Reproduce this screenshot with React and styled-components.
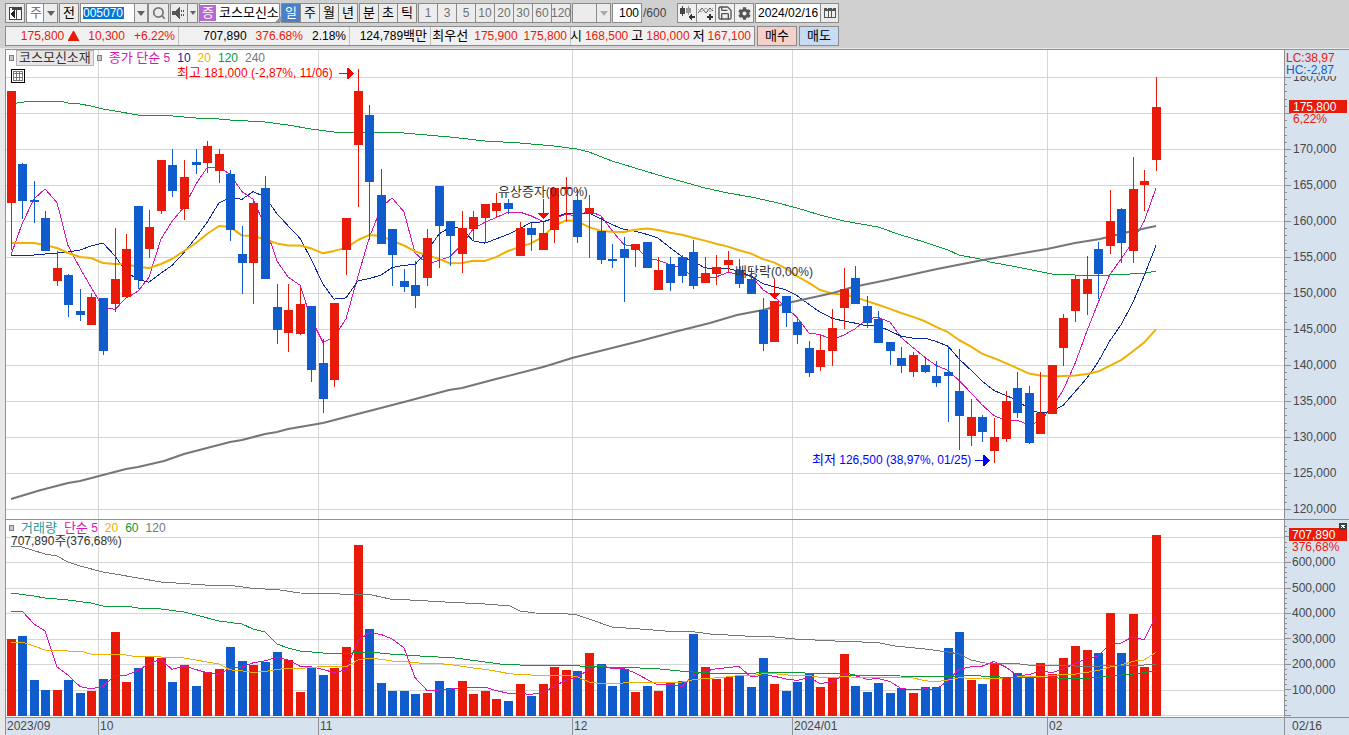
import styled, { createGlobalStyle } from 'styled-components';
import { Save, Search } from 'lucide-react';
import { FaCog } from 'react-icons/fa';

const RED = '#e81a0a';
const BLUE = '#115ccc';

// [high, body top, body bottom, low, rising, volume top] in window pixels
const candles = [
  [91, 91, 203, 250, 1, 639], [163, 164, 201, 219, 0, 636],
  [181, 200, 202, 223, 0, 680], [211, 218, 251, 251, 0, 690],
  [251, 268, 281, 286, 1, 690], [274, 275, 305, 317, 0, 680],
  [289, 311, 315, 321, 0, 693], [293, 297, 325, 325, 1, 691],
  [298, 298, 351, 355, 0, 679], [228, 279, 304, 312, 1, 632],
  [234, 249, 297, 297, 1, 682], [206, 206, 280, 289, 0, 668],
  [210, 227, 249, 258, 1, 657], [160, 160, 211, 214, 1, 658],
  [149, 165, 191, 197, 0, 682], [160, 177, 209, 220, 1, 665],
  [149, 162, 165, 174, 0, 686], [141, 146, 163, 173, 1, 672],
  [149, 154, 171, 183, 1, 669], [170, 174, 230, 241, 0, 647],
  [226, 254, 263, 294, 0, 661], [199, 203, 263, 304, 1, 665],
  [176, 188, 279, 279, 0, 662], [284, 307, 330, 344, 0, 652],
  [284, 310, 333, 352, 1, 660], [288, 304, 334, 335, 1, 692],
  [306, 306, 370, 382, 0, 668], [339, 363, 399, 413, 0, 675],
  [303, 303, 380, 387, 1, 668], [218, 218, 250, 275, 1, 647],
  [69, 91, 145, 207, 1, 545], [105, 115, 182, 240, 0, 629],
  [169, 195, 244, 244, 0, 683], [229, 229, 255, 286, 0, 691],
  [269, 281, 287, 292, 0, 691], [261, 285, 296, 308, 0, 694],
  [229, 238, 278, 286, 1, 693], [186, 186, 226, 268, 0, 681],
  [221, 221, 236, 266, 0, 688], [211, 228, 254, 273, 1, 681],
  [211, 217, 229, 241, 1, 694], [204, 204, 218, 243, 1, 691],
  [193, 203, 211, 217, 1, 699], [199, 203, 209, 214, 0, 701],
  [222, 228, 256, 256, 1, 684], [223, 228, 235, 251, 0, 696],
  [222, 233, 250, 250, 1, 684], [188, 188, 230, 243, 1, 667],
  [177, 187, 189, 222, 1, 670], [189, 200, 237, 243, 0, 671],
  [195, 208, 214, 258, 1, 653], [220, 231, 260, 264, 0, 664],
  [244, 259, 261, 268, 0, 686], [237, 249, 258, 302, 0, 669],
  [244, 244, 250, 267, 1, 692], [242, 242, 268, 268, 0, 686],
  [257, 270, 290, 290, 1, 691], [257, 264, 283, 291, 0, 683],
  [255, 257, 276, 283, 0, 681], [240, 252, 286, 289, 0, 634],
  [257, 273, 283, 283, 1, 667], [255, 267, 274, 285, 1, 679],
  [251, 260, 265, 272, 1, 677], [259, 270, 284, 288, 0, 675],
  [268, 279, 294, 294, 0, 687], [298, 310, 344, 351, 0, 658],
  [301, 301, 342, 342, 1, 684], [296, 296, 313, 327, 0, 691],
  [319, 322, 335, 344, 0, 682], [341, 348, 373, 377, 0, 673],
  [335, 350, 367, 371, 1, 687], [309, 328, 351, 366, 1, 678],
  [268, 289, 308, 329, 1, 654], [266, 278, 304, 304, 0, 686],
  [296, 306, 323, 328, 0, 692], [311, 319, 343, 343, 0, 683],
  [342, 342, 351, 365, 0, 693], [347, 358, 366, 373, 0, 688],
  [352, 355, 372, 377, 1, 693], [357, 365, 372, 373, 0, 687],
  [361, 376, 383, 387, 0, 687], [346, 372, 376, 422, 0, 648],
  [349, 391, 416, 450, 0, 632], [399, 417, 436, 446, 1, 680],
  [415, 417, 432, 442, 0, 684], [418, 437, 451, 463, 1, 663],
  [391, 401, 439, 442, 1, 677], [372, 388, 413, 418, 0, 673],
  [386, 393, 443, 444, 0, 677], [372, 413, 434, 434, 1, 663],
  [365, 365, 414, 414, 1, 674], [314, 318, 348, 366, 1, 658],
  [276, 279, 311, 322, 1, 646], [256, 279, 294, 315, 1, 650],
  [242, 249, 274, 299, 0, 653], [190, 221, 246, 254, 1, 613],
  [208, 209, 243, 263, 0, 653], [157, 189, 251, 263, 1, 614],
  [170, 181, 185, 211, 1, 667], [77, 107, 160, 171, 1, 535],
];

const closes = candles.map((c) => (c[4] ? c[1] : c[2]));
const volumes = candles.map((c) => c[5]);

const candleX = (i) => Math.floor(5 + i * 11.57);

// seed holds the first values, where the window reaches back before the data
const average = (values, seed) =>
  values.map((_, i) => {
    const size = seed.length + 1;
    const y =
      i < seed.length
        ? seed[i]
        : values.slice(i - size + 1, i + 1).reduce((a, b) => a + b, 0) / size;
    return `${candleX(i)},${y.toFixed(1)}`;
  });

const priceMa5 = average(closes, [255, 224, 199, 189]);
const priceMa10 = average(closes, [255, 256, 255, 254, 253, 252, 250, 246, 243]);
const priceMa20 = average(closes, [
  243, 243, 243, 245, 248, 253, 257, 258, 263, 264, 264, 267, 268, 264, 259,
  251, 243, 234, 226,
]);
const volumeMa5 = average(volumes, [612, 611, 624, 631]);
const volumeMa20 = average(volumes, [
  642, 642, 646, 650, 650, 651, 651, 654, 655, 654, 655, 657, 656, 657, 657,
  658, 660, 662, 664,
]);

const priceMa120 =
  '5,104 24,101 54,101 62,103 74,104 85,106 97,109 109,111 132,115 143,116 155,115 178,117 190,118 201,118 224,120 259,122 282,125 305,129 328,132 386,132 409,134 444,137 479,141 514,143 548,146 571,149 583,152 606,161 629,168 652,175 674,181 699,188 722,193 745,197 768,202 791,208 814,215 838,221 872,227 895,235 918,242 942,250 953,255 974,259 984,262 1011,267 1046,274 1069,275 1104,275 1124,274 1140,273 1150,271';
const priceMa240 =
  '5,499 35,490 62,483 74,481 97,475 120,469 132,467 158,461 178,454 201,448 224,442 236,440 259,434 271,432 282,429 317,423 340,417 398,402 443,390 456,388 490,379 537,367 547,364 566,358 634,341 664,333 704,323 731,315 757,310 786,302 827,293 847,287 881,280 931,269 977,260 1041,249 1069,243 1094,239 1122,232 1136,229 1150,226';
const volumeMa60 =
  '5,593 28,596 39,598 62,600 85,603 97,606 120,606 132,608 155,609 178,612 190,615 213,621 236,624 247,629 259,632 271,644 282,648 294,651 317,653 340,654 352,652 363,652 384,654 414,656 449,658 464,660 494,664 514,665 549,665 599,667 634,668 654,669 674,671 687,672 704,673 750,673 759,672 794,672 799,673 839,673 849,675 889,675 894,676 944,677 956,675 994,677 1034,677 1052,678 1056,679 1084,678 1104,676 1127,674 1150,671';
const volumeMa120 =
  '5,546 16,547 39,554 51,556 62,562 74,566 97,572 109,574 132,578 155,582 199,585 229,586 244,588 274,590 294,593 334,594 366,595 384,599 404,600 439,602 479,604 504,606 514,611 529,613 562,614 571,615 583,619 606,627 634,629 659,631 689,632 704,634 739,636 759,636 789,639 829,641 856,642 874,643 889,646 909,648 919,649 934,651 942,652 953,654 965,660 979,663 1014,664 1022,665 1059,665 1069,666 1094,666 1109,665 1119,666 1138,665 1150,664';

const months = [
  { x: 98, label: '10' },
  { x: 318, label: '11' },
  { x: 572, label: '12' },
  { x: 792, label: '2024/01' },
  { x: 1047, label: '02' },
];

const priceTicks = Array.from({ length: 13 }, (_, i) => ({
  y: 77 + i * 36,
  label: `${180 - i * 5},000`,
})).filter((tick) => tick.label !== '175,000');

const volumeTicks = [
  { y: 562, label: '600,000' },
  { y: 588, label: '500,000' },
  { y: 613, label: '400,000' },
  { y: 639, label: '300,000' },
  { y: 664, label: '200,000' },
  { y: 690, label: '100,000' },
];

const periods = ['일', '주', '월', '년'];
const units = ['분', '초', '틱'];
const minutes = ['1', '3', '5', '10', '20', '30', '60', '120'];

function MonthLines({ top, height }) {
  return months.map((m) => (
    <rect key={m.x} x={m.x - 6} y={top} width='1' height={height} fill='#d6d6d6' />
  ));
}

function MaLine({ points, color, width = 1 }) {
  const list = Array.isArray(points) ? points.join(' ') : points;
  return (
    <polyline
      points={list}
      fill='none'
      stroke={color}
      strokeWidth={width}
      strokeLinejoin='round'
      shapeRendering={width > 1 ? 'geometricPrecision' : 'crispEdges'}
    />
  );
}

// Small "event" arrow that points down at a candle
function EventArrow({ x, y }) {
  return (
    <g fill='#ff0000'>
      <rect x={x} y={y} width='1' height='14' />
      <path d={`M${x - 5} ${y + 14}h11l-5 6h-1z`} />
    </g>
  );
}

function PriceChart() {
  return (
    <Chart $height={469} role='img' aria-label='일봉 차트'>
      <g transform='translate(0 -50)'>
        {Array.from({ length: 13 }, (_, i) => (
          <rect key={i} y={77 + i * 36} width='100%' height='1' fill='#d6d6d6' />
        ))}
        <MonthLines top={50} height={469} />
        <MaLine points={priceMa120} color='#0c9a38' />
        <MaLine points={priceMa5} color='#dc14b4' />
        <MaLine points={priceMa10} color='#0a28a0' />
        <MaLine points={priceMa20} color='#f0b000' width={2} />
        <MaLine points={priceMa240} color='#767676' width={2} />
        {candles.map(([high, top, bottom, low, up], i) => (
          <g key={i} fill={up ? RED : BLUE}>
            <rect x={candleX(i)} y={high} width='1' height={low - high} />
            <rect x={candleX(i) - 4} y={top} width='9' height={bottom - top} />
          </g>
        ))}
        <ChartText x='171' y='77' $color='#ff0000'>
          <KoText>최고</KoText> 181,000 (-2,87%, 11/06)
        </ChartText>
        <path d='M333 73h8v-5h1l6 5v1l-6 5h-1v-5h-8z' fill='#ff0000' />
        <ChartText x='806' y='464' $color='#0000ff'>
          <KoText>최저</KoText> 126,500 (38,97%, 01/25)
        </ChartText>
        <path d='M969 460h8v-5h1l6 5v1l-6 5h-1v-5h-8z' fill='#0000ff' />
        <ChartText x='492' y='196'>
          <KoText>유상증자</KoText>(0,00%)
        </ChartText>
        <EventArrow x={537} y={199} />
        <ChartText x='729' y='276'>
          <KoText>배당락</KoText>(0,00%)
        </ChartText>
        <EventArrow x={768} y={279} />
      </g>
    </Chart>
  );
}

function PriceAxis() {
  return (
    <Chart $height={469} role='img' aria-label='가격 축'>
      <g transform='translate(0 -50)'>
        {Array.from({ length: 61 }, (_, i) => (
          <rect
            key={i}
            y={77 + Math.round(i * 7.2)}
            width={i % 5 ? 2 : 6}
            height='1'
            fill='#909090'
          />
        ))}
        {priceTicks.map((tick) => (
          <ChartText key={tick.y} x='8' y={tick.y + 4} $color='#484848'>
            {tick.label}
          </ChartText>
        ))}
        <rect y='50' width='64' height='26' fill='#d7e2ef' />
        <ChartText x='1' y='62' $color={RED}>LC:38,97</ChartText>
        <ChartText x='1' y='74' $color={BLUE}>HC:-2,87</ChartText>
        <rect x='4' y='100' width='58' height='13' fill={RED} />
        <ChartText x='8' y='111' $color='#fff'>175,800</ChartText>
        <ChartText x='8' y='123' $color={RED}>6,22%</ChartText>
      </g>
    </Chart>
  );
}

function VolumeChart() {
  return (
    <Chart $height={197} role='img' aria-label='거래량 차트'>
      <g transform='translate(0 -520)'>
        {[537, 562, 588, 613, 639, 664, 690, 715].map((y) => (
          <rect key={y} y={y} width='100%' height='1' fill='#d6d6d6' />
        ))}
        <MonthLines top={520} height={197} />
        {candles.map((c, i) => (
          <rect
            key={i}
            x={candleX(i) - 4}
            y={c[5]}
            width='9'
            height={716 - c[5]}
            fill={c[4] ? RED : BLUE}
          />
        ))}
        <MaLine points={volumeMa5} color='#dc14b4' />
        <MaLine points={volumeMa20} color='#f0b000' />
        <MaLine points={volumeMa60} color='#0c9a38' />
        <MaLine points={volumeMa120} color='#767676' />
      </g>
    </Chart>
  );
}

function VolumeAxis() {
  return (
    <Chart $height={197} role='img' aria-label='거래량 축'>
      <g transform='translate(0 -520)'>
        {Array.from({ length: 38 }, (_, i) => (
          <rect
            key={i}
            y={715 - Math.round(i * 5.1)}
            width={i % 5 ? 2 : 6}
            height='1'
            fill='#909090'
          />
        ))}
        {volumeTicks.map((tick) => (
          <ChartText key={tick.y} x='7' y={tick.y + 4} $color='#484848'>
            {tick.label}
          </ChartText>
        ))}
        <rect x='4' y='528' width='58' height='13' fill={RED} />
        <ChartText x='7' y='539' $color='#fff'>707,890</ChartText>
        <ChartText x='7' y='551' $color={RED}>376,68%</ChartText>
        <rect x='54' y='523' width='8' height='7' fill='#404040' />
        <path d='M56 525l4 3M60 525l-4 3' stroke='#fff' />
      </g>
    </Chart>
  );
}

function TimeAxis() {
  return (
    <Chart $height={17} role='img' aria-label='날짜 축'>
      <ChartText x='1' y='12' $color='#484848'>2023/09</ChartText>
      {months.map((m) => (
        <g key={m.x}>
          <rect x={m.x - 6} width='1' height='17' fill='#909090' />
          <ChartText x={m.x - 4} y='12' $color='#484848'>{m.label}</ChartText>
        </g>
      ))}
    </Chart>
  );
}

function Caret({ color = '#606060' }) {
  return (
    <svg width='8' height='5' aria-hidden='true'>
      <path d='M0 0h8l-4 5z' fill={color} />
    </svg>
  );
}

function Toolbar() {
  return (
    <Row $gap={1}>
      <ToolButton $width={20} aria-label='화면'>
        <svg width='14' height='14' shapeRendering='crispEdges'>
          <path d='M1 1h12v12h-12z' fill='#fff' stroke='#444' />
          <path d='M4 1h9v3h-9z' fill='#444' />
          <path d='M8 4h1v9h-1z' fill='#444' />
          <path d='M7 4v8l-5-4z' fill='#222' />
        </svg>
      </ToolButton>
      <ComboBox $width={32}>
        <Select aria-label='주기' defaultValue='주' $color='#666'>
          <option>주</option>
        </Select>
        <ArrowBox><Caret /></ArrowBox>
      </ComboBox>
      <ToolButton $width={20}><Ko>전</Ko></ToolButton>
      <Group>
        <CodeBox>
          <CodeInput aria-label='종목코드' defaultValue='005070' />
          <ArrowButton aria-label='종목 목록'><Caret /></ArrowButton>
        </CodeBox>
        <ToolButton $width={21} aria-label='종목 검색'>
          <Search size={14} color='#777' strokeWidth={3} />
        </ToolButton>
      </Group>
      <Group>
        <ToolButton $width={18} aria-label='소리'>
          <svg width='14' height='14' shapeRendering='crispEdges'>
            <path d='M0 5h3l5-4v12l-5-4h-3z' fill='#555' />
            <path d='M9 4h1v2h-1zM11 4h1v2h-1zM9 8h1v2h-1zM11 8h1v2h-1z' fill='#555' />
          </svg>
        </ToolButton>
        <ToolButton $width={11} aria-label='소리 설정'>
          <svg width='6' height='4' aria-hidden='true'>
            <path d='M0 0h6l-3 4z' fill='#606060' />
          </svg>
        </ToolButton>
      </Group>
      <NameBox>
        <Badge>증</Badge>
        <Ko>코스모신소</Ko>
        <svg width='7' height='7' aria-hidden='true'>
          <path d='M7 0v7h-7z' fill='#999' />
        </svg>
      </NameBox>
      <Group>
        {periods.map((p) => (
          <ToolButton key={p} $width={20} $active={p === '일'}>
            <Ko>{p}</Ko>
          </ToolButton>
        ))}
      </Group>
      <Group>
        {units.map((u) => (
          <ToolButton key={u} $width={20}><Ko>{u}</Ko></ToolButton>
        ))}
      </Group>
      <Group>
        {minutes.map((m) => (
          <ToolButton key={m} $width={20} $muted>{m}</ToolButton>
        ))}
      </Group>
      <ComboBox $width={39} $muted>
        <Select aria-label='분 단위' disabled />
        <ArrowBox><Caret color='#aaa' /></ArrowBox>
      </ComboBox>
      <CountInput aria-label='봉 개수' defaultValue='100' />
      <Total>/600</Total>
      <Group>
        <ToolButton $width={20} $light aria-label='차트 유형'>
          <svg width='16' height='16' shapeRendering='crispEdges'>
            <path d='M1 3h5v6h-5zM3 1h1v10h-1z' fill='#444' />
            <path d='M7 3h5v5h-5zM9 1h1v9h-1z' fill='#999' />
            <path d='M16 11v2h-3v3l-4-4 4-4v3z' fill='#333' />
          </svg>
        </ToolButton>
        <ToolButton $width={20} $light aria-label='지표 추가'>
          <svg width='16' height='16'>
            <path d='M0 8l4-5 4 5 4-5 3 3' fill='none' stroke='#555' />
            <path d='M0 4l3 3 5-4 4 4 3-4' fill='none' stroke='#aaa' />
            <path d='M11 9h2v2h2v2h-2v2h-2v-2h-2v-2h2z' fill='#333' />
          </svg>
        </ToolButton>
        <ToolButton $width={20} $light aria-label='저장'>
          <Save size={16} color='#555' strokeWidth={2} />
        </ToolButton>
        <ToolButton $width={20} $light aria-label='설정'>
          <FaCog size={13} color='#555' />
        </ToolButton>
      </Group>
      <DateBox>
        <DateInput aria-label='날짜' defaultValue='2024/02/16' />
        <ArrowButton $width={18} aria-label='달력'>
          <svg width='12' height='12' shapeRendering='crispEdges'>
            <path d='M0 1h12v10h-12z' fill='#555' />
            <path d='M1 4h3v3h-3zM5 4h2v3h-2zM8 4h3v3h-3zM1 7h3v3h-3zM5 7h2v3h-2zM8 7h3v3h-3zM3 0h1v2h-1zM8 0h1v2h-1z' fill='#eee' />
          </svg>
        </ArrowButton>
      </DateBox>
    </Row>
  );
}

function QuoteBar() {
  return (
    <Row $gap={2}>
      <Quotes>
        <QuoteCell $width={172}>
          <Red>175,800</Red>
          <svg width='11' height='10' aria-label='상승'>
            <path d='M5 0h1l5 9v1h-11v-1z' fill={RED} />
          </svg>
          <Wide><Red>10,300</Red></Wide>
          <Wide><Red>+6.22%</Red></Wide>
        </QuoteCell>
        <QuoteCell $width={171} $gap={9}>
          <span>707,890</span>
          <Red>376.68%</Red>
          <span>2.18%</span>
        </QuoteCell>
        <QuoteCell $width={81}>
          <span>124,789<Ko>백만</Ko></span>
        </QuoteCell>
        <QuoteCell $width={140} $gap={6}>
          <Ko>최우선</Ko>
          <Red>175,900</Red>
          <Red>175,800</Red>
        </QuoteCell>
        <QuoteCell $width={184} $gap={3}>
          <Ko>시</Ko>
          <Red>168,500</Red>
          <Ko>고</Ko>
          <Red>180,000</Red>
          <Ko>저</Ko>
          <Red>167,100</Red>
        </QuoteCell>
      </Quotes>
      <OrderButton $color='#f6d0cb'><Ko>매수</Ko></OrderButton>
      <OrderButton $color='#c6dcf4'><Ko>매도</Ko></OrderButton>
    </Row>
  );
}

function App() {
  return (
    <>
      <GlobalStyle />
      <Header>
        <Toolbar />
        <QuoteBar />
      </Header>
      <Main>
        <Panel>
          <PriceChart />
          <Legend>
            <Marker />
            <StockName>코스모신소재</StockName>
            <Marker />
            <LegendItem $color='#dc14b4'><Ko>종가 단순</Ko> 5</LegendItem>
            <LegendItem $color='#0a28a0'>10</LegendItem>
            <LegendItem $color='#f0b000'>20</LegendItem>
            <LegendItem $color='#0c9a38'>120</LegendItem>
            <LegendItem $color='#767676'>240</LegendItem>
          </Legend>
          <GridButton aria-label='표 보기'>
            <svg width='10' height='10' shapeRendering='crispEdges'>
              <path d='M0 0h10v10h-10z' fill='#777' />
              <path d='M1 1h2v1h-2zM4 1h2v1h-2zM7 1h2v1h-2zM1 3h2v3h-2zM4 3h2v3h-2zM7 3h2v3h-2zM1 7h2v2h-2zM4 7h2v2h-2zM7 7h2v2h-2z' fill='#fff' />
            </svg>
          </GridButton>
        </Panel>
        <Axis><PriceAxis /></Axis>
        <Panel>
          <VolumeChart />
          <Legend>
            <Marker />
            <LegendItem $color='#2c9696'><Ko>거래량</Ko></LegendItem>
            <LegendItem $color='#dc14b4'><Ko>단순</Ko> 5</LegendItem>
            <LegendItem $color='#f0b000'>20</LegendItem>
            <LegendItem $color='#0c9a38'>60</LegendItem>
            <LegendItem $color='#767676'>120</LegendItem>
          </Legend>
          <VolumeNow>707,890<Ko>주</Ko>(376,68%)</VolumeNow>
        </Panel>
        <Axis><VolumeAxis /></Axis>
        <TimePanel><TimeAxis /></TimePanel>
        <Axis><LastDate>02/16</LastDate></Axis>
      </Main>
    </>
  );
}

export default App;

const GlobalStyle = createGlobalStyle`
  * {
    box-sizing: border-box;
  }
  body {
    margin: 0;
    background: #e8e8e8;
    color: #000;
  }
  body, button, input, select {
    font-family: 'Liberation Sans', 'Noto Sans CJK KR', sans-serif;
    font-size: 12px;
    line-height: 16px;
  }
`;

// Hangul is set one size larger than the figures beside it
const Ko = styled.span`
  font-size: 13px;
  line-height: 14px;
`;

const KoText = styled.tspan`
  font-size: 13px;
`;

const Header = styled.header`
  display: flex;
  flex-direction: column;
  gap: 3px;
  padding: 3px 5px 2px;
  background: #d0d0d0;
  border-bottom: 1px solid #e8e8e8;
`;

const Row = styled.div`
  display: flex;
  gap: ${(props) => props.$gap}px;
  height: 20px;
  white-space: nowrap;
`;

const Group = styled.div`
  display: flex;
`;

const ToolButton = styled.button`
  display: flex;
  justify-content: center;
  align-items: center;
  flex: none;
  width: ${(props) => props.$width}px;
  height: 20px;
  padding: 0;
  border: 1px solid #8a8a8a;
  background: ${(props) =>
    props.$active ? '#4a80c8' : props.$light ? '#f0f0f0' : '#ececec'};
  color: ${(props) =>
    props.$active ? '#fff' : props.$muted ? '#707070' : '#000'};
  & + & {
    margin-left: -1px;
  }
`;

const ComboBox = styled.div`
  display: grid;
  grid-template-columns: 1fr 14px;
  width: ${(props) => props.$width}px;
  border: 1px solid #8a8a8a;
  background: ${(props) => (props.$muted ? '#ececec' : '#fff')};
`;

const Select = styled.select`
  grid-area: 1 / 1 / 2 / 3;
  min-width: 0;
  padding: 0 0 0 3px;
  border: 0;
  appearance: none;
  background: none;
  color: ${(props) => props.$color};
  font-size: 13px;
`;

const ArrowBox = styled.span`
  grid-area: 1 / 2;
  display: flex;
  justify-content: center;
  align-items: center;
  border-left: 1px solid #8a8a8a;
  background: #ececec;
  pointer-events: none;
`;

const ArrowButton = styled.button`
  display: flex;
  justify-content: center;
  align-items: center;
  flex: none;
  width: ${(props) => props.$width || 13}px;
  margin-left: auto;
  padding: 0;
  border: 0;
  border-left: 1px solid #8a8a8a;
  background: #ececec;
`;

const CodeBox = styled.div`
  display: flex;
  width: 68px;
  border: 1px solid #8a8a8a;
  background: #fff;
`;

const CodeInput = styled.input`
  width: 41px;
  margin: 3px 2px;
  padding: 0;
  border: 0;
  background: #0078d7;
  color: #fff;
`;

const NameBox = styled.div`
  display: flex;
  align-items: center;
  gap: 3px;
  width: 81px;
  border: 1px solid #8a8a8a;
  background: #fff;
  svg {
    flex: none;
    align-self: flex-end;
    margin-left: -7px;
  }
`;

const Badge = styled.span`
  width: 16px;
  flex: none;
  background: #b46ad2;
  color: #fff;
  font-size: 13px;
  text-align: center;
`;

const CountInput = styled.input`
  width: 30px;
  padding: 0 2px;
  border: 1px solid #8a8a8a;
  background: #fff;
  text-align: right;
`;

const Total = styled.span`
  width: 33px;
  color: #444;
  line-height: 20px;
`;

const DateBox = styled.div`
  display: flex;
  width: 84px;
  border: 1px solid #8a8a8a;
  background: #fff;
`;

const DateInput = styled.input`
  width: 64px;
  padding: 0 0 0 2px;
  border: 0;
`;

const Quotes = styled.div`
  display: flex;
  border: 1px solid #8a8a8a;
  background: #f0f0f0;
`;

const QuoteCell = styled.div`
  display: flex;
  justify-content: flex-end;
  align-items: center;
  gap: ${(props) => props.$gap || 4}px;
  width: ${(props) => props.$width}px;
  padding-right: 3px;
  & + & {
    border-left: 1px solid #c0c0c0;
  }
`;

const Red = styled.span`
  color: ${RED};
`;

const Wide = styled.span`
  padding-left: 5px;
`;

const OrderButton = styled.button`
  width: 40px;
  padding: 0;
  border: 1px solid #8a8a8a;
  background: ${(props) => props.$color};
`;

const Main = styled.main`
  display: grid;
  grid-template-columns: minmax(0, 1fr) 65px;
  margin-left: 5px;
  border-left: 1px solid #909090;
`;

const Panel = styled.section`
  position: relative;
  border-top: 1px solid #909090;
  background: #fff;
`;

const TimePanel = styled.section`
  border-top: 1px solid #909090;
  background: #d7e2ef;
`;

const Axis = styled.aside`
  border-top: 1px solid #909090;
  border-left: 1px solid #909090;
  background: #d7e2ef;
`;

const LastDate = styled.div`
  padding-left: 7px;
  color: #484848;
`;

const Chart = styled.svg`
  display: block;
  width: 100%;
  height: ${(props) => props.$height}px;
  shape-rendering: crispEdges;
`;

const ChartText = styled.text`
  fill: ${(props) => props.$color || '#333'};
`;

const Legend = styled.div`
  position: absolute;
  top: 0;
  left: 3px;
  display: flex;
  align-items: center;
  gap: 7px;
`;

const Marker = styled.span`
  width: 5px;
  height: 6px;
  border: 1px solid #808080;
  background: #c8c8c8;
`;

const LegendItem = styled.span`
  color: ${(props) => props.$color};
`;

const StockName = styled.span`
  margin: 0 -4px 0 -5px;
  padding: 0 2px;
  border: 1px solid #b4b4b4;
  background: #e6e6e6;
  color: #333;
  font-size: 13px;
  line-height: 14px;
`;

const GridButton = styled.button`
  position: absolute;
  top: 19px;
  left: 5px;
  width: 14px;
  height: 14px;
  padding: 1px;
  border: 1px solid #000;
  background: #fff;
  svg {
    display: block;
  }
`;

const VolumeNow = styled.div`
  position: absolute;
  top: 13px;
  left: 5px;
  color: #333;
`;
